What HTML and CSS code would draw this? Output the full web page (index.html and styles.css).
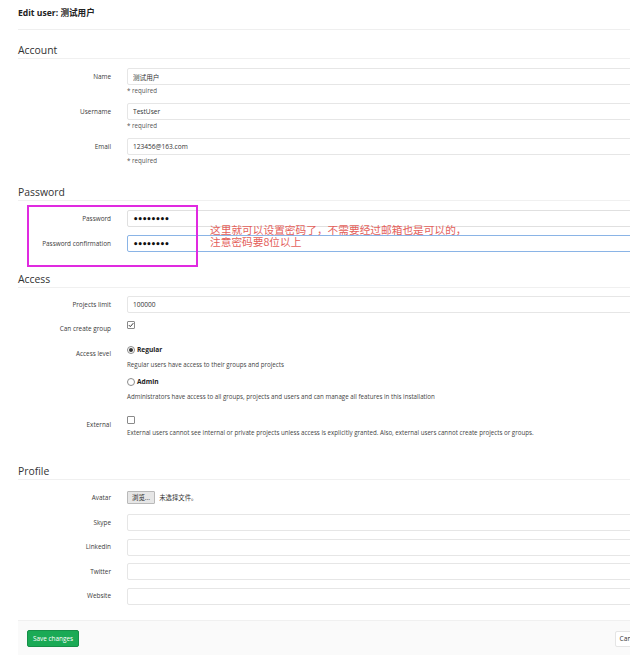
FILE: index.html
```html
<!DOCTYPE html>
<html lang="zh-CN">
<head>
<meta charset="utf-8">
<title>Edit user</title>
<link rel="stylesheet" href="styles.css">
</head>
<body>
<div class="page">
  <h3 class="page-title">Edit user: 测试用户</h3>

  <div class="section">
    <h4 class="section-title">Account</h4>
    <div class="row grp">
      <label class="lbl">Name</label>
      <div class="ctl"><input class="inp" type="text" value="测试用户"><div class="help">* required</div></div>
    </div>
    <div class="row grp">
      <label class="lbl">Username</label>
      <div class="ctl"><input class="inp" type="text" value="TestUser"><div class="help">* required</div></div>
    </div>
    <div class="row grp">
      <label class="lbl">Email</label>
      <div class="ctl"><input class="inp" type="text" value="123456@163.com"><div class="help">* required</div></div>
    </div>
  </div>

  <div class="section sec-pw">
    <h4 class="section-title">Password</h4>
    <div class="row pw-row">
      <label class="lbl">Password</label>
      <div class="ctl"><input class="inp pw" type="password" value="12345678"></div>
    </div>
    <div class="row pw-row">
      <label class="lbl">Password confirmation</label>
      <div class="ctl"><input class="inp pw focus" type="password" value="12345678"></div>
    </div>
  </div>

  <div class="section sec-access">
    <h4 class="section-title">Access</h4>
    <div class="row">
      <label class="lbl">Projects limit</label>
      <div class="ctl"><input class="inp" type="text" value="100000"></div>
    </div>
    <div class="row row-ccg">
      <label class="lbl lbl-pad">Can create group</label>
      <div class="ctl">
        <div class="opt-line">
          <svg class="box" width="8" height="8" viewBox="0 0 8 8"><rect x="0.5" y="0.5" width="7" height="7" rx="0.5" fill="#fff" stroke="#8a8a8a"/><path d="M1.8 4.1 L3.3 5.6 L6.3 2.2" fill="none" stroke="#333" stroke-width="1"/></svg>
        </div>
      </div>
    </div>
    <div class="row row-al">
      <label class="lbl lbl-pad">Access level</label>
      <div class="ctl">
        <div class="opt-line">
          <svg class="radio" width="8" height="8" viewBox="0 0 8 8"><circle cx="4" cy="4" r="3.5" fill="#fff" stroke="#8a8a8a"/><circle cx="4" cy="4" r="2" fill="#333"/></svg>
          <b>Regular</b>
        </div>
        <div class="desc">Regular users have access to their groups and projects</div>
        <div class="opt-line opt-2">
          <svg class="radio" width="8" height="8" viewBox="0 0 8 8"><circle cx="4" cy="4" r="3.5" fill="#fff" stroke="#8a8a8a"/></svg>
          <b>Admin</b>
        </div>
        <div class="desc">Administrators have access to all groups, projects and users and can manage all features in this installation</div>
      </div>
    </div>
    <div class="row row-ext">
      <label class="lbl lbl-pad5">External</label>
      <div class="ctl">
        <div class="opt-line">
          <svg class="box" width="8" height="8" viewBox="0 0 8 8"><rect x="0.5" y="0.5" width="7" height="7" rx="0.5" fill="#fff" stroke="#8a8a8a"/></svg>
        </div>
        <div class="desc desc-ext">External users cannot see internal or private projects unless access is explicitly granted. Also, external users cannot create projects or groups.</div>
      </div>
    </div>
  </div>

  <div class="section sec-profile">
    <h4 class="section-title">Profile</h4>
    <div class="row row-avatar">
      <label class="lbl lbl-pad">Avatar</label>
      <div class="ctl file-ctl"><button class="file-btn" type="button">浏览...</button><span class="file-none">未选择文件。</span></div>
    </div>
    <div class="row prow">
      <label class="lbl">Skype</label>
      <div class="ctl"><input class="inp" type="text"></div>
    </div>
    <div class="row prow">
      <label class="lbl">Linkedin</label>
      <div class="ctl"><input class="inp" type="text"></div>
    </div>
    <div class="row prow">
      <label class="lbl">Twitter</label>
      <div class="ctl"><input class="inp" type="text"></div>
    </div>
    <div class="row prow">
      <label class="lbl">Website</label>
      <div class="ctl"><input class="inp" type="text"></div>
    </div>
  </div>

  <div class="actions">
    <button class="btn-save" type="button">Save changes</button>
    <button class="btn-cancel" type="button">Cancel</button>
  </div>

  <div class="mark-box"></div>
  <div class="note">这里就可以设置密码了，不需要经过邮箱也是可以的，<br>注意密码要8位以上</div>
</div>
</body>
</html>
```

FILE: styles.css
```css
html, body {
  margin: 0;
  padding: 0;
  background: #fff;
  overflow: hidden;
}
body {
  font-family: "Open Sans", "Noto Sans", "Noto Sans CJK SC", sans-serif;
  color: #2e2e2e;
  font-size: 6.4px;
}
.page {
  position: relative;
  margin-left: 18px;
  width: 636px;
}
.page-title {
  margin: 0;
  padding: 8px 0 11px;
  line-height: 10px;
  font-size: 8.6px;
  font-weight: 700;
  color: #222;
  border-bottom: 1px solid #efefef;
}
.section-title {
  margin: 13px 0 9px;
  padding-bottom: 1px;
  line-height: 14px;
  font-size: 10.4px;
  font-weight: 400;
  color: #333;
  border-bottom: 1px solid #f0f0f0;
}
.sec-pw .section-title { margin-top: 19px; }
.sec-access .section-title { margin-top: 20px; margin-bottom: 8px; }
.sec-profile .section-title { margin-top: 26px; }

.row {
  display: grid;
  grid-template-columns: 93px 1fr;
  column-gap: 16px;
  align-items: center;
}
.lbl {
  text-align: right;
  line-height: 10px;
  color: #3a3a3a;
  white-space: nowrap;
}
.grp { align-items: start; margin-bottom: 7px; }
.grp .lbl { padding-top: 4px; }
.ctl { min-width: 0; }
.inp {
  display: block;
  box-sizing: border-box;
  width: 100%;
  height: 17px;
  margin: 0;
  padding: 0 5px;
  border: 1px solid #e6e6e6;
  border-radius: 2px;
  background: #fff;
  font-family: "Open Sans", "Noto Sans", "Noto Sans CJK SC", sans-serif;
  font-size: 6.6px;
  color: #333;
  outline: none;
}
.help {
  margin-top: 1px;
  line-height: 10px;
  color: #555;
  font-size: 6.2px;
}
.pw-row { margin-bottom: 8px; }
.pw {
  font-family: "DejaVu Sans", sans-serif;
  font-size: 8.4px;
  color: #111;
  font-weight: 700;
  letter-spacing: -0.9px;
  border-color: #e0e0e0;
}
.pw.focus {
  border-color: #8ab4e6;
}

.row-ccg, .row-al, .row-ext, .row-avatar { align-items: start; }
.row-ccg { margin-top: 7px; }
.row-al { margin-top: 11px; }
.row-ext { margin-top: 13px; }
.lbl-pad { padding-top: 4px; }
.lbl-pad5 { padding-top: 5px; }

.opt-line {
  display: flex;
  align-items: center;
  gap: 2px;
  height: 10px;
  line-height: 10px;
  color: #222;
}
.opt-line b { font-weight: 700; font-size: 6.6px; }
.box, .radio { display: block; flex: none; }
.opt-2 { margin-top: 7px; }
.desc {
  margin-top: 5px;
  line-height: 10px;
  color: #444;
  font-size: 6.2px;
  white-space: nowrap;
}
.desc-ext { margin-top: 3px; }

.sec-profile .section-title { margin-bottom: 9px; }
.row-avatar { height: 17px; margin-bottom: 8px; }
.file-ctl { display: flex; align-items: center; height: 14px; padding-top: 1px; }
.file-btn {
  height: 13px;
  padding: 0 4px;
  margin: 0;
  border: 1px solid #b9b9b9;
  border-radius: 1px;
  background: #e6e6e6;
  font-family: "Noto Sans CJK SC", sans-serif;
  font-size: 6.4px;
  color: #222;
  line-height: 11px;
}
.file-none {
  margin-left: 4px;
  font-family: "Noto Sans CJK SC", sans-serif;
  font-size: 6.4px;
  color: #333;
}
.prow { margin-bottom: 7.5px; }
.prow:last-child { margin-bottom: 0; }

.actions {
  margin-top: 15px;
  background: #fafafa;
  border-top: 1px solid #f0f0f0;
  padding: 9px 9px 12px;
  display: flex;
  justify-content: space-between;
  align-items: flex-start;
}
.btn-save {
  height: 17px;
  padding: 0 5px;
  margin: 0;
  border: 1px solid #168f48;
  border-radius: 2px;
  background: #1aaa55;
  color: #fff;
  font-family: "Open Sans", sans-serif;
  font-size: 6.4px;
}
.btn-cancel {
  height: 16px;
  margin: 1px 0 0;
  padding: 0 4px;
  border: 1px solid #e5e5e5;
  border-radius: 2px;
  background: #fff;
  color: #333;
  font-family: "Open Sans", sans-serif;
  font-size: 6.6px;
}

.mark-box {
  position: absolute;
  left: 9px;
  top: 205px;
  width: 167px;
  height: 58px;
  border: 2px solid #e02ae0;
}
.note {
  position: absolute;
  left: 192px;
  top: 224px;
  font-family: "Noto Sans CJK SC", serif;
  font-size: 10.7px;
  line-height: 12px;
  color: #e4605a;
  white-space: nowrap;
}
```
